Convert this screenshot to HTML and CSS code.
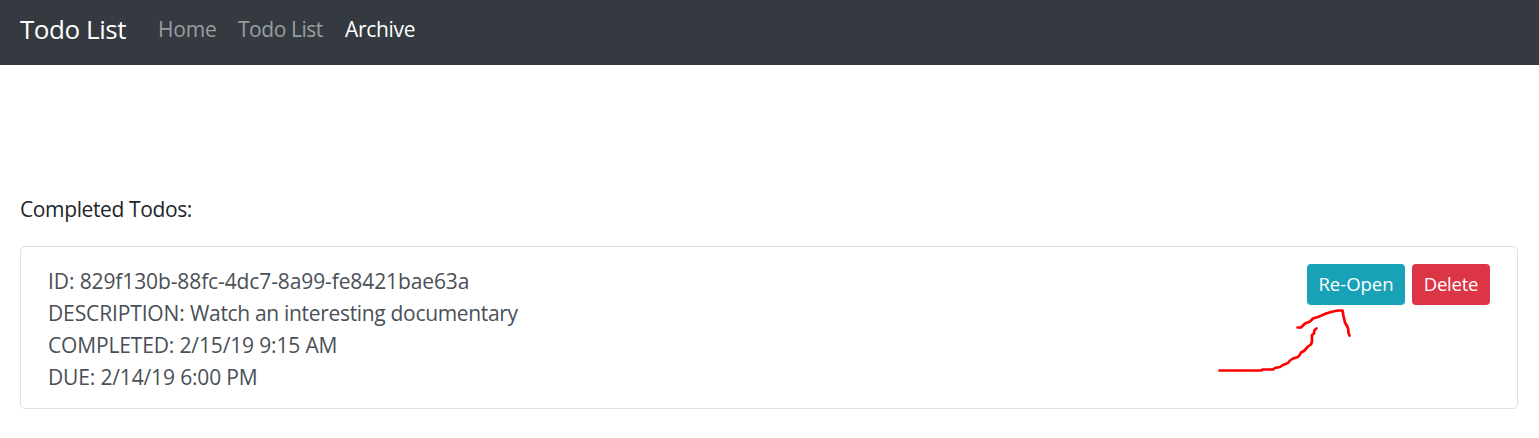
FILE: index.html
```html
<!DOCTYPE html>
<html lang="en">
<head>
<meta charset="utf-8">
<title>Todo List</title>
<link rel="stylesheet" href="styles.css">
</head>
<body>
<nav class="navbar">
  <a class="brand">Todo List</a>
  <a class="nav-link home">Home</a>
  <a class="nav-link todos">Todo List</a>
  <a class="nav-link active">Archive</a>
</nav>
<main class="content">
  <p class="heading">Completed Todos:</p>
  <section class="card">
    <div class="details">
      <div class="id">ID: 829f130b-88fc-4dc7-8a99-fe8421bae63a</div>
      <div class="description">DESCRIPTION: <span class="value">Watch an interesting documentary</span></div>
      <div class="completed">COMPLETED: 2/15/19 9:15 AM</div>
      <div class="due">DUE: 2/14/19 6:00 PM</div>
    </div>
    <div class="actions">
      <button class="btn reopen">Re-Open</button>
      <button class="btn delete">Delete</button>
    </div>
  </section>
</main>
<svg class="arrow" width="150" height="80" viewBox="0 0 150 80">
  <path d="M9.500 70.500H51L53 69.500H63L65 68L70 67L73 65L78 63L80 60.500L83 58.500L88 57L90 54.500L91 52.500L94 51L98 46.500L101 44.500L102 41.500V35L104 33.500L104.500 30L106.500 28.500M87.500 27.500H91L95 23.500L100 21.500L103 18.500L108 17L116 13.500L121 12L128 10.500H132.500L133.500 16L135 22.500L138 28L138.500 33L139.500 35.500"/>
</svg>
</body>
</html>
```
FILE: styles.css
```css
* { box-sizing: border-box; }
body {
  margin: 0;
  height: 438px;
  background: #fff;
  color: #212529;
  font: 21px/32px "Open Sans", "Noto Sans", sans-serif;
  overflow: hidden;
}
.navbar {
  display: flex;
  height: 65px;
  padding: 13px 20px 0;
  background: #343a40;
  white-space: nowrap;
}
.brand { width: 138px; color: #fff; font-size: 26px; letter-spacing: -0.45px; }
.nav-link { color: #999da0; }
.home { width: 80px; letter-spacing: -0.2px; }
.todos { width: 107px; letter-spacing: -0.45px; }
.active { color: #fff; letter-spacing: -0.3px; }
.content { padding: 128px 21px 0 20px; }
.heading { margin: 0 0 21px; letter-spacing: -0.38px; }
.card {
  display: flex;
  justify-content: space-between;
  height: 163px;
  padding: 17px 27px;
  border: 1px solid #dfdfdf;
  border-radius: 5px;
  color: #495057;
}
.details { padding-top: 1px; }
.id { letter-spacing: -0.11px; }
.description { letter-spacing: -0.13px; }
.description .value { letter-spacing: -0.32px; }
.completed { letter-spacing: -0.15px; }
.due { letter-spacing: -0.15px; }
.actions { display: flex; gap: 7px; }
.btn {
  height: 41px;
  padding: 0 0 2px;
  border: 0;
  border-radius: 4px;
  color: #fff;
  font: 18.500px/39px "Open Sans", "Noto Sans", sans-serif;
}
.reopen { width: 98px; background: #17a2b8; }
.delete { width: 78px; background: #dc3545; letter-spacing: -0.25px; }
.arrow {
  position: absolute;
  left: 1210px;
  top: 300px;
  fill: none;
  stroke: #f00;
  stroke-width: 2.700;
  stroke-linecap: round;
  stroke-linejoin: round;
}
```
